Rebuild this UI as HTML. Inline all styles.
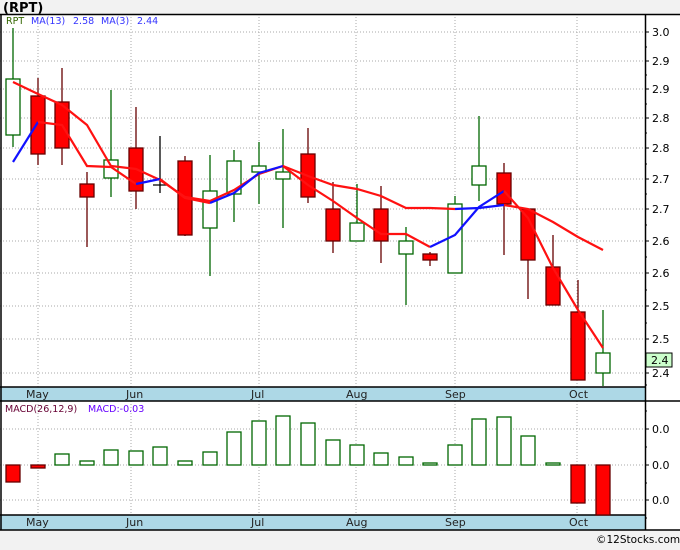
<!DOCTYPE html><html><head><style>body{margin:0;width:680px;height:546px;background:#f2f2f2;overflow:hidden;font-family:"DejaVu Sans",Verdana,sans-serif}</style></head><body>
<svg width="680" height="546" xmlns="http://www.w3.org/2000/svg" font-family="DejaVu Sans, Verdana, sans-serif">
<rect x="0" y="14" width="680" height="516" fill="#fff"/>
<rect x="0" y="530" width="680" height="16" fill="#f2f2f2"/>
<text x="3" y="12" font-size="13" font-weight="bold" fill="#000">(RPT)</text>
<g stroke="#aaa" stroke-dasharray="1,2" stroke-width="1">
<line x1="0" x2="645" y1="32" y2="32"/><line x1="0" x2="645" y1="61" y2="61"/><line x1="0" x2="645" y1="89" y2="89"/><line x1="0" x2="645" y1="118" y2="118"/><line x1="0" x2="645" y1="148" y2="148"/><line x1="0" x2="645" y1="179" y2="179"/><line x1="0" x2="645" y1="209" y2="209"/><line x1="0" x2="645" y1="241" y2="241"/><line x1="0" x2="645" y1="273" y2="273"/><line x1="0" x2="645" y1="306" y2="306"/><line x1="0" x2="645" y1="339" y2="339"/><line x1="0" x2="645" y1="373" y2="373"/>
<line x1="0" x2="645" y1="429" y2="429"/><line x1="0" x2="645" y1="465" y2="465"/><line x1="0" x2="645" y1="500" y2="500"/>
<g><line x1="38" x2="38" y1="14" y2="530"/><line x1="131" x2="131" y1="14" y2="530"/><line x1="259" x2="259" y1="14" y2="530"/><line x1="356" x2="356" y1="14" y2="530"/><line x1="455" x2="455" y1="14" y2="530"/><line x1="577" x2="577" y1="14" y2="530"/></g>
</g>
<rect x="0" y="387" width="645" height="14" fill="#add8e6"/>
<rect x="0" y="515" width="645" height="15" fill="#add8e6"/>
<g stroke="#000" stroke-width="1.5">
<line x1="0" x2="680" y1="14.5" y2="14.5"/><line x1="0" x2="645" y1="387" y2="387"/><line x1="0" x2="680" y1="401" y2="401"/><line x1="0" x2="645" y1="515" y2="515"/><line x1="0" x2="680" y1="530" y2="530"/>
<line x1="645.5" x2="645.5" y1="14" y2="530"/><line x1="1" x2="1" y1="14" y2="530"/>
</g>
<g font-size="11" fill="#222">
<text x="26" y="398">May</text><text x="126" y="398">Jun</text><text x="251" y="398">Jul</text><text x="346" y="398">Aug</text><text x="445" y="398">Sep</text><text x="569" y="398">Oct</text>
<text x="26" y="526">May</text><text x="126" y="526">Jun</text><text x="251" y="526">Jul</text><text x="346" y="526">Aug</text><text x="445" y="526">Sep</text><text x="569" y="526">Oct</text>
</g>
<g font-size="11" fill="#000">
<text x="652" y="36">3.0</text><text x="652" y="65">2.9</text><text x="652" y="93">2.9</text><text x="652" y="122">2.8</text><text x="652" y="152">2.8</text><text x="652" y="183">2.7</text><text x="652" y="213">2.7</text><text x="652" y="245">2.6</text><text x="652" y="277">2.6</text><text x="652" y="310">2.5</text><text x="652" y="343">2.5</text><text x="652" y="377">2.4</text>
<text x="652" y="433">0.0</text><text x="652" y="469">0.0</text><text x="652" y="504">0.0</text>
</g>
<g stroke="#000"><path d="M645 32h4M645 61h4M645 89h4M645 118h4M645 148h4M645 179h4M645 209h4M645 241h4M645 273h4M645 306h4M645 339h4M645 373h4M645 429h4M645 465h4M645 500h4M645 47h2M645 75h2M645 104h2M645 133h2M645 164h2M645 194h2M645 225h2M645 257h2M645 290h2M645 323h2M645 356h2M645 385h2M645 411h2M645 447h2M645 483h2M645 518h2"/></g>
<rect x="646" y="353" width="26" height="14" fill="#ccffcc" stroke="#000"/>
<text x="651" y="364" font-size="11">2.4</text>
<text x="6" y="24" font-size="9.5" fill="#336600">RPT</text>
<g font-size="9.5" fill="#3333ff"><text x="31" y="24">MA(13)</text><text x="73" y="24">2.58</text><text x="101" y="24">MA(3)</text><text x="137" y="24">2.44</text></g>
<text x="5" y="412" font-size="9.5" fill="#660033">MACD(26,12,9)</text>
<text x="88" y="412" font-size="9.5" fill="#6600ff">MACD:-0.03</text>
<g stroke-width="1.3">
<g stroke="#006600" fill="#fff">
<path d="M13 28V147M111 90V197M210 155V276M234 150V222M259 142V204M283 129V228M357 184V240M406 227V305M455 196V273M479 116V201M603 310V386"/>
<rect x="6" y="79" width="14" height="56"/><rect x="104" y="160" width="14" height="18"/><rect x="203" y="191" width="14" height="37"/><rect x="227" y="161" width="14" height="33"/><rect x="252" y="166" width="14" height="6"/><rect x="276" y="172" width="14" height="7"/><rect x="350" y="223" width="14" height="18"/><rect x="399" y="241" width="14" height="13"/><rect x="448" y="204" width="14" height="69"/><rect x="472" y="166" width="14" height="19"/><rect x="596" y="353" width="14" height="20"/>
</g>
<path d="M160 136V193M153 185H167" stroke="#000"/>
<g stroke="#660000" fill="#ff0000">
<path d="M38 78V165M62 68V165M87 172V247M136 107V209M185 156V236M308 128V203M333 182V253M381 186V263M430 252V266M504 163V255M528 209V299M553 235V305M578 280V380"/>
<rect x="31" y="96" width="14" height="58"/><rect x="55" y="102" width="14" height="46"/><rect x="80" y="184" width="14" height="13"/><rect x="129" y="148" width="14" height="43"/><rect x="178" y="161" width="14" height="74"/><rect x="301" y="154" width="14" height="43"/><rect x="326" y="209" width="14" height="32"/><rect x="374" y="209" width="14" height="32"/><rect x="423" y="254" width="14" height="6"/><rect x="497" y="173" width="14" height="31"/><rect x="521" y="209" width="14" height="51"/><rect x="546" y="267" width="14" height="38"/><rect x="571" y="312" width="14" height="68"/>
</g>
</g>
<g fill="none" stroke-width="2.2">
<polyline stroke="#ff1111" points="13,82 38,94 62,105 87,125 111,166 136,169 160,180 185,197 210,201 234,190 259,174 283,166 308,176 333,185 357,189 381,196 406,208 430,208 455,209"/>
<polyline stroke="#1111ff" points="455,209 479,208 504,205"/>
<polyline stroke="#ff1111" points="504,205 528,209 553,222 578,237 603,250"/>
<polyline stroke="#1111ff" points="13,162 38,122"/>
<polyline stroke="#ff1111" points="38,122 62,125 87,166 111,167 136,184"/>
<polyline stroke="#1111ff" points="136,184 160,179"/>
<polyline stroke="#ff1111" points="160,179 185,198 210,203"/>
<polyline stroke="#1111ff" points="210,203 234,193 259,173 283,166"/>
<polyline stroke="#ff1111" points="283,166 308,185 333,201 357,218 381,234 406,234 430,247"/>
<polyline stroke="#1111ff" points="430,247 455,235 479,207 504,191"/>
<polyline stroke="#ff1111" points="504,191 528,218 553,268 578,310 603,348"/>
</g>
<g stroke-width="1.3">
<g stroke="#006600" fill="#fff">
<rect x="55" y="454" width="14" height="11"/><rect x="80" y="461" width="14" height="4"/><rect x="104" y="450" width="14" height="15"/><rect x="129" y="451" width="14" height="14"/><rect x="153" y="447" width="14" height="18"/><rect x="178" y="461" width="14" height="4"/><rect x="203" y="452" width="14" height="13"/><rect x="227" y="432" width="14" height="33"/><rect x="252" y="421" width="14" height="44"/><rect x="276" y="416" width="14" height="49"/><rect x="301" y="423" width="14" height="42"/><rect x="326" y="440" width="14" height="25"/><rect x="350" y="445" width="14" height="20"/><rect x="374" y="453" width="14" height="12"/><rect x="399" y="457" width="14" height="8"/><rect x="423" y="463" width="14" height="2"/><rect x="448" y="445" width="14" height="20"/><rect x="472" y="419" width="14" height="46"/><rect x="497" y="417" width="14" height="48"/><rect x="521" y="436" width="14" height="29"/><rect x="546" y="463" width="14" height="2"/>
</g>
<g stroke="#660000" fill="#ff0000">
<rect x="6" y="465" width="14" height="17"/><rect x="31" y="465" width="14" height="3"/><rect x="571" y="465" width="14" height="38"/><rect x="596" y="465" width="14" height="50"/>
</g>
</g>
<text x="596" y="543" font-size="10.5" fill="#000">©12Stocks.com</text>
</svg>
</body></html>
